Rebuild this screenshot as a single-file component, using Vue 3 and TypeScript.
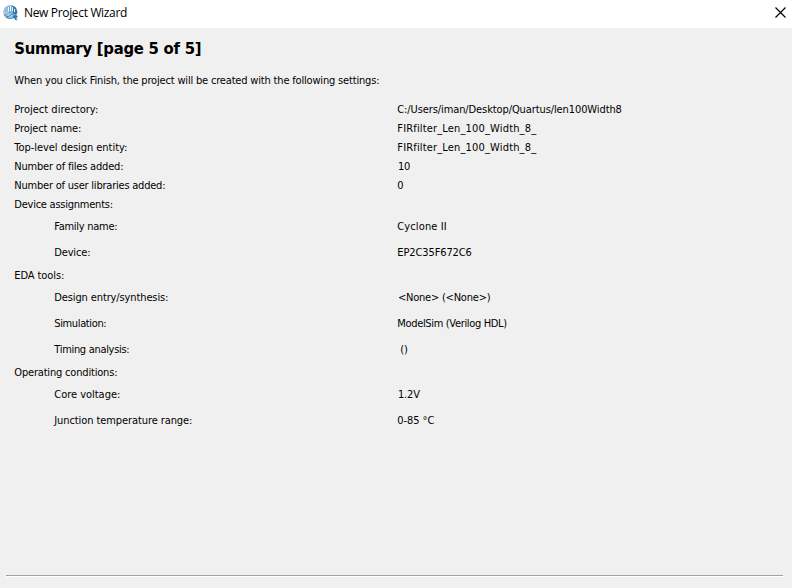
<script setup lang="ts">
interface Row {
  label: string
  labelWidth: number
  value?: string
  valueWidth?: number
  nested?: boolean
  inset?: number
}

const rows: Row[] = [
  { label: 'Project directory:', labelWidth: 84, value: 'C:/Users/iman/Desktop/Quartus/len100Width8', valueWidth: 224.5 },
  { label: 'Project name:', labelWidth: 67, value: 'FIRfilter_Len_100_Width_8_', valueWidth: 139 },
  { label: 'Top-level design entity:', labelWidth: 113, value: 'FIRfilter_Len_100_Width_8_', valueWidth: 139 },
  { label: 'Number of files added:', labelWidth: 109, value: '10', valueWidth: 12, inset: 0.6 },
  { label: 'Number of user libraries added:', labelWidth: 151, value: '0', valueWidth: 7 },
  { label: 'Device assignments:', labelWidth: 98.5 },
  { label: 'Family name:', labelWidth: 63, value: 'Cyclone II', valueWidth: 49.5, nested: true },
  { label: 'Device:', labelWidth: 36, value: 'EP2C35F672C6', valueWidth: 74.5, nested: true },
  { label: 'EDA tools:', labelWidth: 50 },
  { label: 'Design entry/synthesis:', labelWidth: 114, value: '<None> (<None>)', valueWidth: 92.5, nested: true, inset: 0.6 },
  { label: 'Simulation:', labelWidth: 52, value: 'ModelSim (Verilog HDL)', valueWidth: 109.5, nested: true },
  { label: 'Timing analysis:', labelWidth: 75, value: '()', valueWidth: 7.6, nested: true, inset: 3 },
  { label: 'Operating conditions:', labelWidth: 103 },
  { label: 'Core voltage:', labelWidth: 66, value: '1.2V', valueWidth: 22, nested: true, inset: 0.6 },
  { label: 'Junction temperature range:', labelWidth: 138, value: '0-85 °C', valueWidth: 37, nested: true },
]

// Adjusts tracking so that a label takes exactly the given width.
const vFit = {
  mounted(el: HTMLElement, binding: { value: number | undefined }) {
    const count = (el.textContent ?? '').length
    if (!binding.value || !count) return
    const natural = el.getBoundingClientRect().width
    el.style.letterSpacing = `${(binding.value - natural) / count}px`
  },
}
</script>

<template>
  <main class="wizard">
    <header class="titlebar">
      <svg class="logo" viewBox="0 0 16 16" aria-hidden="true">
        <circle cx="7.4" cy="7.2" r="6.9" fill="#6fa9d0" />
        <path d="M.8 9Q0 4 3 2L5 1V8L1 10Z" fill="#93bddb" />
        <path d="M9 .6Q14.3 2 14.3 8L12 10 9 7Z" fill="#3579ae" />
        <path d="M1 10L7 7.5l6 3.5-2 2Q4 16 1 10Z" fill="#4a90c2" />
        <path d="M5.5 1.8v5M7.5 1v5.5M9.5 2v4.5M11.5 4v3" stroke="#f2f8fc" stroke-width="1" />
        <path d="M1 7.5l9 6M3 7l9 5.5M2 11.5l7-4M4.5 13.5l7-4" stroke="#cfe4f2" stroke-width=".7" />
        <path d="M10 10.5h4.5v2.2H13l1.5 2.6-2.2-.2-1.2-2.3H10Z" fill="#3275a8" />
      </svg>
      <span v-fit="103" class="caption">New Project Wizard</span>
      <svg class="close" viewBox="0 0 11 11" aria-hidden="true">
        <path d="M.5.5l10 10M10.5.5l-10 10" stroke="#000" stroke-width="1.15" />
      </svg>
    </header>
    <section class="content">
      <h1><span v-fit="187">Summary [page 5 of 5]</span></h1>
      <p class="intro"><span v-fit="365">When you click Finish, the project will be created with the following settings:</span></p>
      <div class="summary">
        <div v-for="row in rows" :key="row.label" class="row" :class="{ nested: row.nested }">
          <div class="label"><span v-fit="row.labelWidth">{{ row.label }}</span></div>
          <div class="value" :style="{ paddingLeft: `${row.inset ?? 0}px` }">
            <span v-if="row.value" v-fit="row.valueWidth">{{ row.value }}</span>
          </div>
        </div>
      </div>
    </section>
    <div class="rule"></div>
  </main>
</template>

<style>
body {
  margin: 0;
}
</style>

<style scoped>
.wizard {
  display: flex;
  flex-direction: column;
  width: 792px;
  height: 588px;
  overflow: hidden;
  background: #f0f0f0;
  color: #000;
  font: 11px/19px "DejaVu Sans Condensed", "DejaVu Sans", sans-serif;
  white-space: nowrap;
}
.wizard span {
  display: inline-block;
}
.titlebar {
  display: flex;
  align-items: center;
  box-sizing: border-box;
  height: 28px;
  padding: 0 6px 3px 3px;
  background: #fff;
}
.logo {
  width: 16px;
  height: 16px;
}
.caption {
  margin-left: 5px;
  font: 12px/20px "Open Sans", "Noto Sans", sans-serif;
}
.close {
  width: 11px;
  height: 11px;
  margin-left: auto;
}
.content {
  flex: 1;
  padding: 10px 14px 0 14.3px;
}
h1 {
  margin: 0;
  font-size: 16.5px;
  line-height: 22px;
  font-weight: bold;
}
.intro {
  margin: 11px 0 10px;
}
.row {
  display: grid;
  grid-template-columns: 383px 1fr;
  height: 19px;
  line-height: 19px;
}
.row.nested {
  height: 26px;
  line-height: 26px;
}
.nested .label {
  padding-left: 40px;
}
.rule {
  height: 1px;
  margin: 0 9px 11px 6px;
  background: #a0a0a0;
  border-bottom: 1px solid #fff;
}
</style>
